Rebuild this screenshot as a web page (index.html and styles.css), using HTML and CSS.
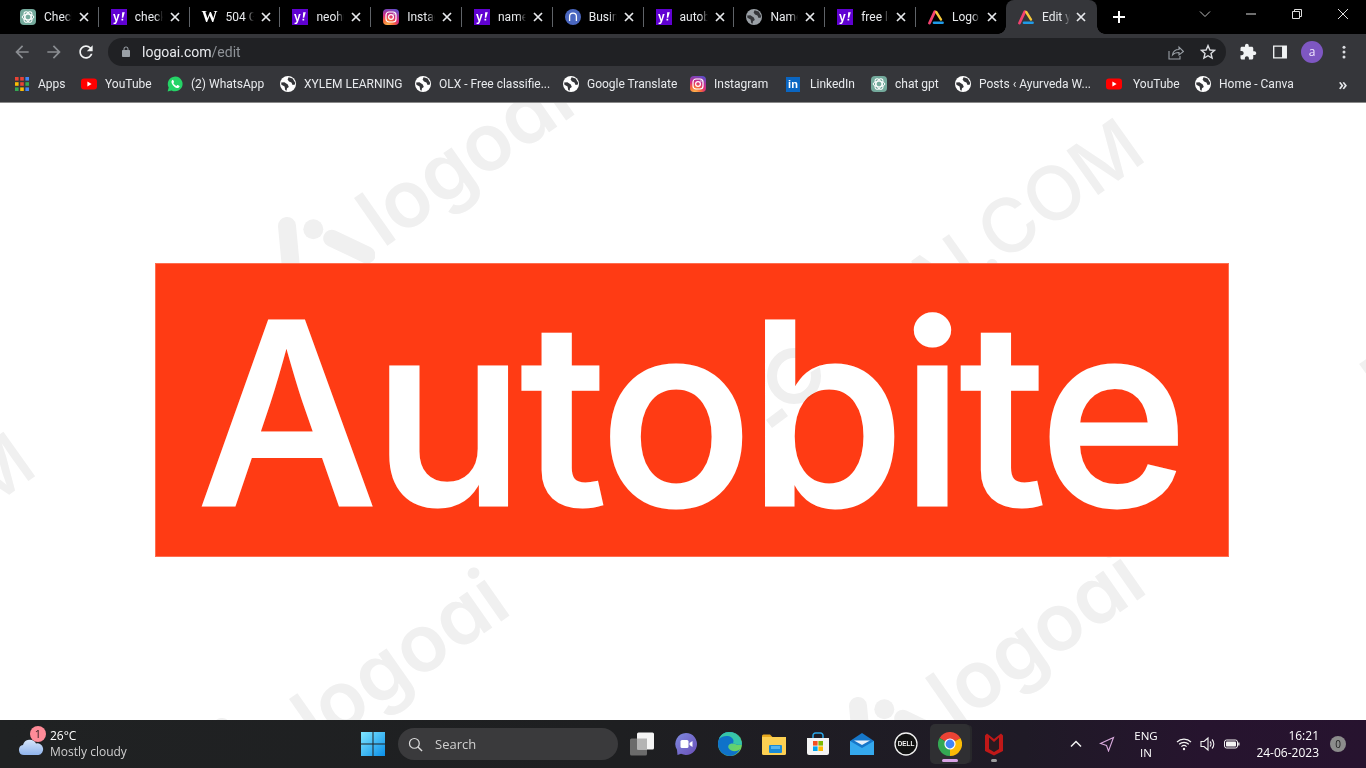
FILE: index.html
```html
<!DOCTYPE html>
<html lang="en">
<head>
<meta charset="utf-8">
<title>Edit your logo</title>
<link rel="stylesheet" href="styles.css">
</head>
<body>
<svg class="defs" aria-hidden="true">
  <defs>
    <radialGradient id="ig" cx="30%" cy="105%" r="115%">
      <stop offset="0" stop-color="#fdc350"/><stop offset=".35" stop-color="#f5653c"/><stop offset=".6" stop-color="#d6297f"/><stop offset="1" stop-color="#5a4fcf"/>
    </radialGradient>
    <linearGradient id="edge" x1="0" y1="0" x2="1" y2="1">
      <stop offset="0" stop-color="#36c6b0"/><stop offset="1" stop-color="#7cd84b"/>
    </linearGradient>
    <linearGradient id="win" x1="0" y1="0" x2="1" y2="1">
      <stop offset="0" stop-color="#7fe6ff"/><stop offset="1" stop-color="#0a8fe8"/>
    </linearGradient>
    <linearGradient id="meet" x1="0" y1="0" x2="1" y2="1">
      <stop offset="0" stop-color="#7f8be0"/><stop offset="1" stop-color="#6a4fb8"/>
    </linearGradient>
    <linearGradient id="cloud" x1="0" y1="0" x2="0" y2="1">
      <stop offset="0" stop-color="#d6e6fb"/><stop offset="1" stop-color="#8fb4ec"/>
    </linearGradient>
    <symbol id="gpt" viewBox="0 0 16 16">
      <rect width="16" height="16" rx="4" fill="#74aa9c"/>
      <g fill="none" stroke="#fff" stroke-width="1">
        <ellipse cx="8" cy="8" rx="5.800" ry="2.800"/>
        <ellipse cx="8" cy="8" rx="5.800" ry="2.800" transform="rotate(60 8 8)"/>
        <ellipse cx="8" cy="8" rx="5.800" ry="2.800" transform="rotate(120 8 8)"/>
      </g>
    </symbol>
    <symbol id="yahoo" viewBox="0 0 16 16">
      <rect width="16" height="16" fill="#6001d2"/>
      <text x="2" y="11.500" class="sym-y">y</text>
      <path d="M11.200 3.200h2.600L12.200 8.800h-1.400ZM10.500 9.800h1.700v1.700h-1.700Z" fill="#fff"/>
    </symbol>
    <symbol id="ig-i" viewBox="0 0 16 16">
      <rect width="16" height="16" rx="4" fill="url(#ig)"/>
      <rect x="3" y="3" width="10" height="10" rx="3" fill="none" stroke="#fff" stroke-width="1.200"/>
      <circle cx="8" cy="8" r="2.400" fill="none" stroke="#fff" stroke-width="1.200"/>
      <circle cx="11" cy="5" r=".7" fill="#fff"/>
    </symbol>
    <symbol id="globe" viewBox="0 0 16 16">
      <circle cx="8" cy="8" r="8" fill="currentColor"/>
      <path fill="#35363a" d="M8.600 1.200 12.600 2.600 15 6.400 15 8.400 12.600 9 11.400 6.400 9 5.600 7.600 3.600ZM1.200 6.600 4.400 6.200 7.800 8.600 8.800 11 7 12.200 6.600 14.800 5.200 14 4.600 10.600 1.400 8.800Z"/>
    </symbol>
    <symbol id="triangle" viewBox="0 0 16 16">
      <path d="M1.500 14 6.800 2.600" fill="none" stroke="#f2416f" stroke-width="2.800" stroke-linecap="round"/>
      <path d="M8.200 3 13 10.600" fill="none" stroke="#f6c83c" stroke-width="2.400" stroke-linecap="round"/>
      <path d="M6 13.800h8.600" fill="none" stroke="#1f9be8" stroke-width="2.600" stroke-linecap="round"/>
    </symbol>
    <symbol id="yt" viewBox="0 0 16 16">
      <rect y="2.400" width="16" height="11.200" rx="3" fill="#f00"/>
      <path d="M6.400 5.600 10.600 8 6.400 10.400Z" fill="#fff"/>
    </symbol>
    <symbol id="x-mark" viewBox="0 0 10 10">
      <path d="M1 1 9 9M9 1 1 9" stroke="currentColor" stroke-width="1.700" fill="none"/>
    </symbol>
    <symbol id="wm-icon" viewBox="0 0 100 80">
      <path d="M12 9 18 72" fill="none" stroke="currentColor" stroke-width="18" stroke-linecap="round"/>
      <circle cx="38.300" cy="12.300" r="10" fill="currentColor"/>
      <path d="M56.700 21.300 92 38" fill="none" stroke="currentColor" stroke-width="17" stroke-linecap="round"/>
    </symbol>
  </defs>
</svg>

<header class="chrome">
  <div class="tabstrip">
    <div class="tab"><svg class="fav"><use href="#gpt"/></svg><span class="tab-title">Check</span><svg class="tab-x"><use href="#x-mark"/></svg></div>
    <div class="tab"><svg class="fav"><use href="#yahoo"/></svg><span class="tab-title">check</span><svg class="tab-x"><use href="#x-mark"/></svg></div>
    <div class="tab"><span class="fav fav-w">W</span><span class="tab-title">504 Gateway</span><svg class="tab-x"><use href="#x-mark"/></svg></div>
    <div class="tab"><svg class="fav"><use href="#yahoo"/></svg><span class="tab-title">neohub</span><svg class="tab-x"><use href="#x-mark"/></svg></div>
    <div class="tab"><svg class="fav"><use href="#ig-i"/></svg><span class="tab-title">Instagram</span><svg class="tab-x"><use href="#x-mark"/></svg></div>
    <div class="tab"><svg class="fav"><use href="#yahoo"/></svg><span class="tab-title">name</span><svg class="tab-x"><use href="#x-mark"/></svg></div>
    <div class="tab"><svg class="fav" viewBox="0 0 16 16"><circle cx="8" cy="8" r="8" fill="#4a67c0"/><path d="M4.600 12V7.600a3.400 3.400 0 0 1 6.800 0V12" fill="none" stroke="#fff" stroke-width="1.300"/></svg><span class="tab-title">Business</span><svg class="tab-x"><use href="#x-mark"/></svg></div>
    <div class="tab"><svg class="fav"><use href="#yahoo"/></svg><span class="tab-title">autobite</span><svg class="tab-x"><use href="#x-mark"/></svg></div>
    <div class="tab"><svg class="fav fav-grey"><use href="#globe"/></svg><span class="tab-title">Name</span><svg class="tab-x"><use href="#x-mark"/></svg></div>
    <div class="tab"><svg class="fav"><use href="#yahoo"/></svg><span class="tab-title">free logo</span><svg class="tab-x"><use href="#x-mark"/></svg></div>
    <div class="tab tab-before-active"><svg class="fav"><use href="#triangle"/></svg><span class="tab-title">Logo</span><svg class="tab-x"><use href="#x-mark"/></svg></div>
    <div class="tab tab-active"><svg class="fav"><use href="#triangle"/></svg><span class="tab-title">Edit your</span><svg class="tab-x"><use href="#x-mark"/></svg></div>
    <svg class="new-tab" viewBox="0 0 14 14"><path d="M7 1v12M1 7h12" stroke="#fff" stroke-width="2" fill="none"/></svg>
    <div class="win-controls">
      <svg class="win-btn" viewBox="0 0 12 12"><path d="M1 3.500 6 8.500 11 3.500" stroke="#bbb" fill="none"/></svg>
      <svg class="win-btn" viewBox="0 0 12 12"><path d="M1 6H11" stroke="#ddd" fill="none"/></svg>
      <svg class="win-btn" viewBox="0 0 12 12"><path d="M1.500 3.500h7v7h-7zM3.500 3.500v-2h7v7h-2" stroke="#ddd" fill="none"/></svg>
      <svg class="win-btn" viewBox="0 0 12 12"><path d="M1 1 11 11M11 1 1 11" stroke="#ddd" fill="none"/></svg>
    </div>
  </div>

  <div class="toolbar">
    <svg class="tool nav dim" viewBox="0 0 24 24"><path d="M20 11H7.830l5.590-5.590L12 4l-8 8 8 8 1.410-1.410L7.830 13H20v-2z"/></svg>
    <svg class="tool nav dim" viewBox="0 0 24 24"><path d="M4 11h12.170l-5.590-5.590L12 4l8 8-8 8-1.410-1.410L16.170 13H4v-2z"/></svg>
    <svg class="tool nav" viewBox="0 0 24 24"><path d="M17.650 6.350C16.200 4.900 14.210 4 12 4c-4.420 0-7.990 3.580-7.990 8s3.570 8 7.990 8c3.730 0 6.840-2.550 7.730-6h-2.080c-.82 2.330-3.040 4-5.650 4-3.310 0-6-2.690-6-6s2.690-6 6-6c1.660 0 3.140.69 4.220 1.780L13 11h7V4l-2.350 2.350z"/></svg>
    <div class="omnibox">
      <svg class="lock" viewBox="0 0 24 24"><path d="M18 8h-1V6c0-2.760-2.240-5-5-5S7 3.240 7 6v2H6c-1.100 0-2 .9-2 2v10c0 1.100.9 2 2 2h12c1.100 0 2-.9 2-2V10c0-1.100-.9-2-2-2zM9 6c0-1.660 1.340-3 3-3s3 1.340 3 3v2H9V6z"/></svg>
      <span class="url">logoai.com<span class="url-path">/edit</span></span>
      <svg class="omni-icon share" viewBox="0 0 16 16"><path d="M1 7v8h11v-3M4.500 11c.5-3.500 3-5.500 6.500-5.500V3l4.500 4.500L11 11V8.500c-2.500 0-5 .7-6.500 2.500Z" fill="none" stroke="#9aa0a6" stroke-width="1.100"/></svg>
      <svg class="omni-icon star" viewBox="0 0 16 16"><path d="M8 1.600 9.900 6l4.700.4-3.600 3.100 1.100 4.600L8 11.700 3.900 14.100 5 9.500 1.400 6.400 6.100 6Z" fill="none" stroke="#dadce0" stroke-width="1.400"/></svg>
    </div>
    <svg class="tool" viewBox="0 0 24 24"><path d="M20.500 11H19V7c0-1.100-.9-2-2-2h-4V3.500C13 2.120 11.880 1 10.500 1S8 2.120 8 3.500V5H4c-1.100 0-1.990.9-1.990 2v3.800H3.500c1.490 0 2.700 1.210 2.700 2.700s-1.210 2.700-2.700 2.700H2V20c0 1.100.9 2 2 2h3.800v-1.500c0-1.490 1.210-2.700 2.700-2.700 1.490 0 2.700 1.210 2.700 2.700V22H17c1.100 0 2-.9 2-2v-4h1.500c1.380 0 2.500-1.120 2.500-2.500S21.880 11 20.500 11z"/></svg>
    <svg class="tool" viewBox="0 0 24 24"><path fill-rule="evenodd" d="M2.700 3.300h18.600v17.400H2.700zM4.500 5v14h10.200V5z"/></svg>
    <div class="tool-slot"><span class="avatar">a</span></div>
    <svg class="tool menu" viewBox="0 0 24 24"><circle cx="12" cy="5.500" r="2"/><circle cx="12" cy="12" r="2"/><circle cx="12" cy="18.500" r="2"/></svg>
  </div>

  <nav class="bookmarks">
    <div class="bm">
      <svg class="fav fav-apps" viewBox="0 0 14 14"><rect x="0" y="0" width="3.600" height="3.600" fill="#ea4335"/><rect x="5.200" y="0" width="3.600" height="3.600" fill="#ea4335"/><rect x="10.400" y="0" width="3.600" height="3.600" fill="#4285f4"/><rect x="0" y="5.200" width="3.600" height="3.600" fill="#fbbc05"/><rect x="5.200" y="5.200" width="3.600" height="3.600" fill="#ea4335"/><rect x="10.400" y="5.200" width="3.600" height="3.600" fill="#34a853"/><rect x="0" y="10.400" width="3.600" height="3.600" fill="#34a853"/><rect x="5.200" y="10.400" width="3.600" height="3.600" fill="#fbbc05"/><rect x="10.400" y="10.400" width="3.600" height="3.600" fill="#4285f4"/></svg>
      <span class="bm-text apps-text">Apps</span>
    </div>
    <div class="bm"><svg class="fav"><use href="#yt"/></svg><span class="bm-text">YouTube</span></div>
    <div class="bm">
      <svg class="fav" viewBox="0 0 16 16"><path d="M.6 15.400 1.700 11.500A7.400 7.400 0 1 1 4.600 14.400Z" fill="#25d366"/><path d="M5.400 3.900c-.5.4-1.100 1.200-.9 2.300.4 2.300 3 5.100 5.400 5.700 1.100.3 2-.3 2.400-.9.300-.5.300-1 .2-1.100l-1.800-.9c-.2-.1-.4 0-.5.100l-.7.900c-1.300-.4-2.700-1.700-3.200-3l.7-.8c.1-.2.1-.3 0-.5l-.8-1.800c-.1-.2-.4-.2-.6 0Z" fill="#fff"/></svg>
      <span class="bm-text">(2) WhatsApp</span>
    </div>
    <div class="bm"><svg class="fav"><use href="#globe"/></svg><span class="bm-text">XYLEM LEARNING</span></div>
    <div class="bm"><svg class="fav"><use href="#globe"/></svg><span class="bm-text">OLX - Free classifie...</span></div>
    <div class="bm"><svg class="fav"><use href="#globe"/></svg><span class="bm-text">Google Translate</span></div>
    <div class="bm"><svg class="fav"><use href="#ig-i"/></svg><span class="bm-text">Instagram</span></div>
    <div class="bm"><span class="fav fav-in">in</span><span class="bm-text bm-text-in">LinkedIn</span></div>
    <div class="bm"><svg class="fav"><use href="#gpt"/></svg><span class="bm-text">chat gpt</span></div>
    <div class="bm"><svg class="fav"><use href="#globe"/></svg><span class="bm-text">Posts ‹ Ayurveda W...</span></div>
    <div class="bm"><svg class="fav"><use href="#yt"/></svg><span class="bm-text bm-text-yt">YouTube</span></div>
    <div class="bm"><svg class="fav"><use href="#globe"/></svg><span class="bm-text">Home - Canva</span></div>
    <div class="bm bm-more">»</div>
  </nav>
</header>

<main class="canvas">
  <div class="wm wm-a"><svg class="wm-mark"><use href="#wm-icon"/></svg><span class="wm-word">logoai</span></div>
  <div class="wm wm-b"><svg class="wm-mark"><use href="#wm-icon"/></svg><span class="wm-word">logoai</span></div>
  <div class="wm wm-c"><svg class="wm-mark"><use href="#wm-icon"/></svg><span class="wm-word">logoai</span></div>
  <span class="wm-site wm-site-a">LOGOAI.COM</span>
  <span class="wm-site wm-site-b">LOGOAI.COM</span>
  <span class="wm-site wm-site-c">LOGOAI.COM</span>
  <div class="logo-box">
    <span class="logo-name">Autobite</span>
    <svg class="logo-ghost" viewBox="0 0 70 90"><ellipse cx="35" cy="32" rx="22" ry="23" fill="none" stroke="#efefef" stroke-width="10"/><path d="M10 80 26 68" stroke="#efefef" stroke-width="10" fill="none"/></svg>
  </div>
</main>

<footer class="taskbar">
  <div class="weather">
    <svg class="cloud" viewBox="0 0 26 18"><path d="M6 17a5 5 0 0 1-1-9.900A7 7 0 0 1 18 5.500a5.800 5.800 0 0 1 2.500 11.500Z" fill="url(#cloud)"/></svg>
    <span class="weather-badge">1</span>
    <div class="weather-text"><span class="temp">26°C</span><span class="cond">Mostly cloudy</span></div>
  </div>
  <svg class="start" viewBox="0 0 24 24"><path fill="url(#win)" d="M0 0h11.500v11.500H0zM12.500 0H24v11.500H12.500zM0 12.500h11.500V24H0zM12.500 12.500H24V24H12.500z"/></svg>
  <div class="search">
    <svg class="search-icon" viewBox="0 0 16 16"><circle cx="6.800" cy="6.800" r="5.200" fill="none" stroke="#ddd" stroke-width="1.300"/><path d="M10.600 10.600 15 15" stroke="#ddd" stroke-width="1.500"/></svg>
    <span>Search</span>
  </div>
  <div class="apps">
    <div class="app"><svg class="app-icon" viewBox="0 0 24 24"><rect x="0" y="6.500" width="17" height="17" rx="1.500" fill="#6b6b6b"/><rect x="7" y="0.500" width="17" height="17" rx="1.500" fill="#f4f4f4"/><rect x="7" y="6.500" width="10" height="11" fill="#b4b4b4"/></svg></div>
    <div class="app"><svg class="app-icon" viewBox="0 0 24 24"><path d="M12 1a11 11 0 1 1-5 20.800L3.500 23 3 17.800A11 11 0 0 1 12 1Z" fill="url(#meet)"/><rect x="6.500" y="8" width="8" height="8" rx="1.500" fill="#fff"/><path d="M15.500 11 18.500 9v6l-3-2Z" fill="#fff"/></svg></div>
    <div class="app"><svg class="app-icon" viewBox="0 0 24 24"><circle cx="12" cy="12" r="12" fill="url(#edge)"/><path d="M22 17C18 21 12 19 10.500 16 9.500 13.500 11.500 11 15 11.500 17.500 11.800 20 13.500 24 12.500 23 5.500 18 0 11 0 4 0 0 6 0 12c0 7 6 12 12 12 4.500 0 8-3 10-7Z" fill="#0f72c9"/><path d="M24 12.500C23.500 5.500 18 0 11 0 6 0 2.500 3 1 7c3-3 9-4 12.500-1.500 2 1.500 2.500 3 1.500 6 3 .5 5.500 2 9 1Z" fill="#37c6a8"/></svg></div>
    <div class="app"><svg class="app-icon" viewBox="0 0 24 24"><path d="M0 4a1.500 1.500 0 0 1 1.500-1.500H8L10.500 5H0Z" fill="#e8a91f"/><path d="M0 5h24v16.500A1.500 1.500 0 0 1 22.500 23H1.500A1.500 1.500 0 0 1 0 21.500Z" fill="#fcd052"/><rect x="7" y="13" width="13" height="8" rx="1" fill="#1a8bd6"/><rect x="9" y="14" width="9" height="3" fill="#56b5ee"/></svg></div>
    <div class="app"><svg class="app-icon" viewBox="0 0 24 24"><path d="M7 6V3.500A2.500 2.500 0 0 1 9.500 1h5A2.500 2.500 0 0 1 17 3.500V6" fill="none" stroke="#2aa5e5" stroke-width="1.500"/><path d="M1 6h22v15a2 2 0 0 1-2 2H3a2 2 0 0 1-2-2Z" fill="#f4f4f4"/><rect x="7" y="9" width="4.600" height="4.600" fill="#f25022"/><rect x="12.400" y="9" width="4.600" height="4.600" fill="#7fba00"/><rect x="7" y="14.400" width="4.600" height="4.600" fill="#00a4ef"/><rect x="12.400" y="14.400" width="4.600" height="4.600" fill="#ffb900"/></svg></div>
    <div class="app"><svg class="app-icon" viewBox="0 0 24 24"><path d="M0 9 12 1l12 8v14H0Z" fill="#1677c9"/><path d="M0 9 12 16 24 9V23H0Z" fill="#35a9ee"/><path d="M4 8.500h16L12 13Z" fill="#e8f1fb"/></svg></div>
    <div class="app"><svg class="app-icon" viewBox="0 0 24 24"><circle cx="12" cy="12" r="11" fill="#111" stroke="#f2f2f2" stroke-width="1.300"/><text x="12" y="14.400" class="dell-text">DELL</text></svg></div>
    <div class="app app-active"><svg class="app-icon" viewBox="0 0 24 24"><path fill="#ea4335" d="M12 12 1.600 6A12 12 0 0 1 22.400 6Z"/><path fill="#fbbc05" d="M12 12 22.400 6A12 12 0 0 1 12 24Z"/><path fill="#34a853" d="M12 12 12 24A12 12 0 0 1 1.600 6Z"/><circle cx="12" cy="12" r="5.600" fill="#fff"/><circle cx="12" cy="12" r="4.400" fill="#4285f4"/></svg></div>
    <div class="app app-open"><svg class="app-icon" viewBox="0 0 24 24"><path d="M12 23.500 3 19V3.500L5 1.500 12 7 19 1.500l2 2V19Z" fill="#c01818"/><path d="M7 5.500V17l5 3 5-3V5.500L12 10Z" fill="#2a1a20"/></svg></div>
  </div>
  <div class="tray">
    <svg class="tray-caret" viewBox="0 0 12 8"><path d="M1 6.500 6 1.500 11 6.500" stroke="#f2f2f2" stroke-width="1.500" fill="none"/></svg>
    <svg class="tray-arrow" viewBox="0 0 16 16"><path d="M14.500 1.500 1.500 7.500 7.500 9.500 9.500 15Z" fill="none" stroke="#d8a9dc" stroke-width="1.100"/></svg>
    <div class="lang"><span>ENG</span><span>IN</span></div>
    <svg class="tray-icon" viewBox="0 0 16 16"><path d="M1 6a10 10 0 0 1 14 0M3.200 8.300a7 7 0 0 1 9.600 0M5.400 10.600a4 4 0 0 1 5.200 0" stroke="#f2f2f2" stroke-width="1.200" fill="none"/><circle cx="8" cy="13" r="1.200" fill="#f2f2f2"/></svg>
    <svg class="tray-icon" viewBox="0 0 16 16"><path d="M1 5.500h3L8 2v12L4 10.500H1Z" fill="none" stroke="#f2f2f2" stroke-width="1.100"/><path d="M10 5.500a3.500 3.500 0 0 1 0 5M12 3.500a6.500 6.500 0 0 1 0 9" fill="none" stroke="#f2f2f2" stroke-width="1.100"/></svg>
    <svg class="tray-icon" viewBox="0 0 16 16"><rect x=".5" y="4" width="13" height="8" rx="2" fill="none" stroke="#f2f2f2"/><rect x="2" y="5.500" width="10" height="5" rx=".8" fill="#f2f2f2"/><rect x="14.200" y="6.500" width="1.300" height="3" fill="#f2f2f2"/></svg>
    <div class="clock"><span>16:21</span><span>24-06-2023</span></div>
    <span class="notif">0</span>
  </div>
</footer>
</body>
</html>
```

FILE: styles.css
```css
* { box-sizing: border-box; }
html, body { margin: 0; height: 100%; }
body {
  width: 1366px;
  height: 768px;
  overflow: hidden;
  display: flex;
  flex-direction: column;
  font-family: "Open Sans", "Noto Sans", sans-serif;
  font-size: 12px;
  background: #fff;
}
.defs { position: absolute; width: 0; height: 0; }
.sym-y { font: 700 12px "Liberation Sans", sans-serif; fill: #fff; }

/* browser chrome */
.chrome { flex: none; }
.fav { width: 16px; height: 16px; flex: none; display: block; color: #fff; }
.fav-grey { color: #9aa0a6; }
.fav-apps { width: 14px; height: 14px; }
.fav-w { font: 900 16px/16px "Liberation Serif", serif; text-align: center; color: #fff; }
.fav-in { width: 14px; margin: 0 0 0 2px; background: #0a66c2; color: #fff; font: 700 11px/15px "Liberation Sans", sans-serif; text-align: center; height: 15px; }

.tabstrip {
  height: 34px;
  background: #000;
  display: flex;
  align-items: center;
  padding-left: 8px;
}
.tab {
  position: relative;
  width: 90.8px;
  height: 34px;
  flex: none;
  display: flex;
  align-items: center;
  padding-left: 12px;
  color: #e8eaed;
}
.tab::after {
  content: "";
  position: absolute;
  right: 0;
  top: 7px;
  bottom: 7px;
  width: 1px;
  background: #5f6368;
}
.tab-before-active { width: 90px; }
.tab-before-active::after { display: none; }
.tab-title {
  width: 28px;
  margin-left: 8px;
  overflow: hidden;
  white-space: nowrap;
  font-family: Roboto, sans-serif;
  font-size: 12px;
  line-height: 16px;
  -webkit-mask-image: linear-gradient(to right, #000 72%, transparent 100%);
  mask-image: linear-gradient(to right, #000 72%, transparent 100%);
}
.tab-x { width: 10px; height: 10px; margin-left: 7px; color: #e8eaed; flex: none; }
.tab-active {
  background: #35363a;
  border-radius: 8px 8px 0 0;
}
.tab-active .tab-x { margin-left: 6px; }
.tab-active::after { display: none; }
.tab-active::before {
  content: "";
  position: absolute;
  left: -8px;
  right: -8px;
  bottom: 0;
  height: 8px;
  background:
    radial-gradient(circle at 0 0, #000 7.5px, #35363a 8px) left bottom / 8px 8px no-repeat,
    radial-gradient(circle at 100% 0, #000 7.5px, #35363a 8px) right bottom / 8px 8px no-repeat;
}
.tab-active > * { position: relative; }
.new-tab { width: 14px; height: 14px; margin-left: 15px; flex: none; }
.win-controls { margin-left: auto; display: flex; }
.win-btn { width: 12px; height: 12px; margin: -6px 17px 0; display: block; overflow: visible; }

.toolbar {
  height: 32px;
  background: #35363a;
  display: flex;
  align-items: flex-end;
  padding-left: 6px;
}
.tool { width: 32px; height: 28px; flex: none; padding: 5px 7px; fill: #f1f3f4; display: block; }
.tool.nav { padding: 4px 6px; }
.tool.dim { fill: #8a8d91; }
.tool.menu { fill: #dadce0; }
.tool-slot { width: 32px; height: 28px; flex: none; display: flex; align-items: center; justify-content: center; }
.avatar {
  width: 22px;
  height: 22px;
  border-radius: 50%;
  background: #7e57c2;
  color: #f1e9ff;
  font-size: 12px;
  line-height: 21px;
  text-align: center;
}
.omnibox {
  width: 1118px;
  height: 28px;
  margin: 0 6px;
  background: #202124;
  border-radius: 14px;
  display: flex;
  align-items: center;
  padding: 0 10px 0 12px;
  flex: none;
}
.lock { width: 12px; height: 12px; fill: #9aa0a6; flex: none; }
.url { margin-left: 10px; font-family: Roboto, sans-serif; font-size: 14px; color: #e8eaed; }
.url-path { color: #8f9398; }
.omni-icon { width: 16px; height: 16px; flex: none; }
.share { margin-left: auto; }
.star { margin-left: 16px; }

.bookmarks {
  height: 36px;
  background: #35363a;
  display: grid;
  grid-template-columns: 66px 86px 113px 135px 148px 127px 94px 87px 84px 151px 89px 141px 14px;
  align-items: center;
  padding-left: 15px;
  color: #e8eaed;
}
.bm { display: flex; align-items: center; white-space: nowrap; }
.bm-text { margin-left: 8px; font-family: Roboto, sans-serif; font-size: 12px; line-height: 16px; }
.bm-text-in { margin-left: 10px; }
.bm-text-yt { margin-left: 11px; }
.apps-text { margin-left: 9px; }
.bm-more { font-size: 16px; font-weight: 600; line-height: 16px; justify-content: center; }

/* page */
.canvas {
  position: relative;
  flex: 1;
  min-height: 0;
  overflow: hidden;
  background: #fff;
  border-top: 1px solid #8a8a8a;
  display: flex;
  align-items: center;
  justify-content: center;
  padding: 0 0 3px 18px;
}
.wm { position: absolute; color: #f0f0f0; width: 0; height: 0; }
.wm-a { left: 287px; top: 114px; }
.wm-b { left: 222px; top: 615px; }
.wm-c { left: 858px; top: 594px; }
.wm-mark { position: absolute; left: -12px; top: 0; width: 100px; height: 80px; }
.wm-word {
  position: absolute;
  left: 79px;
  top: -33px;
  font: 600 80px/81px Inter, sans-serif;
  font-feature-settings: "cv11";
  transform-origin: 0 50%;
  transform: rotate(-35deg);
  white-space: nowrap;
}
.wm-site {
  position: absolute;
  font: 500 75px/75px Inter, sans-serif;
  color: #f0f0f0;
  transform-origin: 0 50%;
  transform: rotate(-35.5deg);
  white-space: nowrap;
}
.wm-site-a { left: 740px; top: 276px; }
.wm-site-b { left: -369px; top: 590px; }
.wm-site-c { left: 1370px; top: 249px; }

.logo-box {
  position: relative;
  width: 1074px;
  height: 294px;
  padding-top: 6px;
  background: #ff3b14;
  border: 1px solid #ff6e50;
  display: flex;
  align-items: center;
  justify-content: center;
}
.logo-name {
  font: 500 253px/284px Inter, sans-serif;
  letter-spacing: -4.3px;
  -webkit-text-stroke: 3px #fff;
  margin-right: 3px;
  color: #fff;
  white-space: nowrap;
}
.logo-ghost {
  position: absolute;
  left: 603px;
  top: 80px;
  width: 70px;
  height: 90px;
  mix-blend-mode: darken;
  clip-path: polygon(0 0, 37px 0, 37px 37px, 62px 22px, 62px 50px, 37px 65px, 37px 90px, 0 90px);
}

/* taskbar */
.taskbar {
  flex: none;
  height: 48px;
  position: relative;
  display: flex;
  align-items: center;
  background: linear-gradient(90deg, #202223 0%, #1e1f21 45%, #1f1a26 75%, #26142e 88%, #27132f 100%);
  color: #fff;
}
.weather { position: relative; width: 361px; height: 48px; flex: none; }
.cloud { position: absolute; left: 18px; top: 18px; width: 26px; height: 18px; }
.weather-badge {
  position: absolute;
  left: 30px;
  top: 6px;
  width: 16px;
  height: 16px;
  border-radius: 50%;
  background: #ff8b98;
  color: #2a1a1c;
  font-size: 11px;
  line-height: 16px;
  text-align: center;
}
.weather-text { position: absolute; left: 50px; top: 8px; display: flex; flex-direction: column; line-height: 16px; white-space: nowrap; }
.temp { font-size: 12px; }
.cond { font-size: 12px; color: #cfcfcf; }
.start { width: 24px; height: 24px; flex: none; }
.search {
  width: 220px;
  height: 32px;
  margin-left: 13px;
  flex: none;
  background: #3a3a3c;
  border-radius: 16px;
  display: flex;
  align-items: center;
  padding-left: 10px;
  font-size: 13px;
  color: #d0d0d0;
}
.search-icon { width: 15px; height: 15px; margin-right: 12px; }
.apps { margin-left: 2px; display: flex; flex: none; }
.app { position: relative; width: 44px; height: 40px; display: flex; align-items: center; justify-content: center; }
.app-icon { width: 24px; height: 24px; display: block; }
.dell-text { font: 700 6.400px "Liberation Sans", sans-serif; fill: #f2f2f2; text-anchor: middle; }
.app-active::before {
  content: "";
  position: absolute;
  left: 2px;
  right: 2px;
  top: 0;
  bottom: 0;
  background: #2f2f32;
  border-radius: 5px;
  box-shadow: 3px 0 0 -1px #28282b;
}
.app-active .app-icon { position: relative; }
.app-active::after {
  content: "";
  position: absolute;
  left: 14px;
  bottom: 2px;
  width: 16px;
  height: 3px;
  border-radius: 2px;
  background: #d9a3e6;
}
.app-open::after {
  content: "";
  position: absolute;
  left: 19px;
  bottom: 2px;
  width: 6px;
  height: 3px;
  border-radius: 2px;
  background: #9d9d9d;
}
.tray { position: absolute; left: 1062px; top: 0; height: 48px; display: flex; align-items: center; }
.tray-caret { width: 12px; height: 8px; margin: 0 8px; flex: none; }
.tray-arrow { width: 16px; height: 16px; margin: 0 9px; flex: none; }
.lang { width: 44px; flex: none; display: flex; flex-direction: column; align-items: center; font-size: 11.500px; line-height: 17px; margin-right: 4px; }
.tray-icon { width: 16px; height: 16px; margin: 0 4px; flex: none; }
.clock { width: 75px; flex: none; display: flex; flex-direction: column; align-items: flex-end; font-size: 12px; line-height: 17px; }
.notif {
  width: 16px;
  height: 16px;
  margin-left: 11px;
  flex: none;
  border-radius: 50%;
  background: #8c8c8c;
  color: #1c1c1c;
  font-size: 10px;
  line-height: 16px;
  text-align: center;
}
```
